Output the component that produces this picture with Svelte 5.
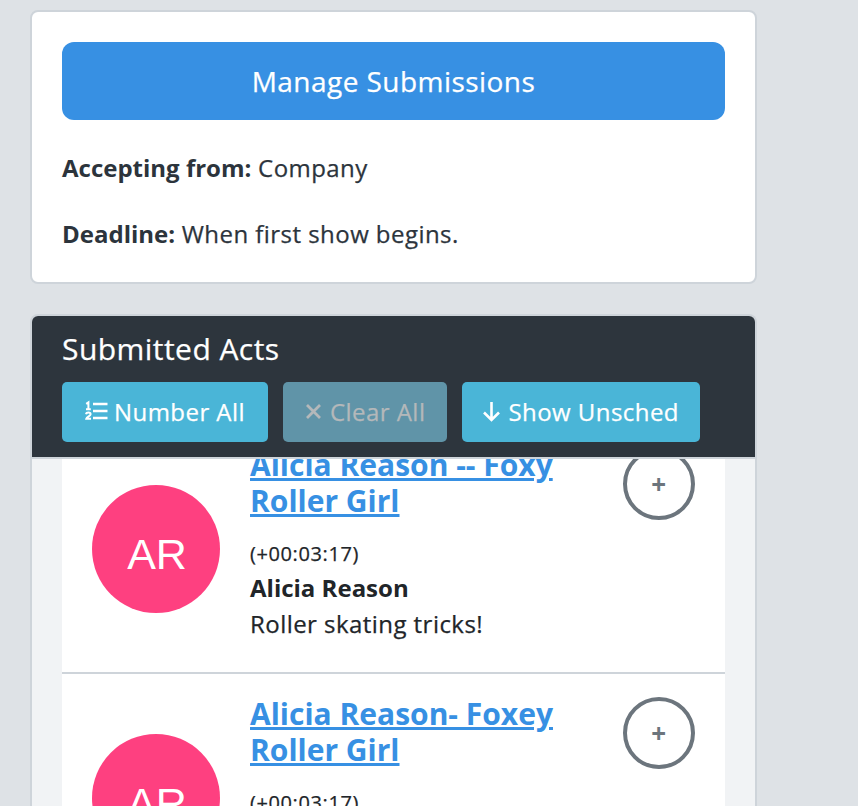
<script>
  const acts = [
    { title: 'Alicia Reason -- Foxy Roller Girl', time: '(+00:03:17)', name: 'Alicia Reason', desc: 'Roller skating tricks!' },
    { title: 'Alicia Reason- Foxey Roller Girl', time: '(+00:03:17)', name: 'Alicia Reason', desc: 'Roller skating tricks!' }
  ];
</script>

<div class="page">
  <section class="card info">
    <button class="manage">Manage Submissions</button>
    <p><strong>Accepting from:</strong> Company</p>
    <p><strong>Deadline:</strong> When first show begins.</p>
  </section>

  <section class="card acts">
    <header>
      <h2>Submitted Acts</h2>
      <div class="tools">
        <button class="tool number">
          <svg width="24" height="22" viewBox="0 0 24 22" fill="none" stroke="currentColor">
            <path d="M2.2 3.8 4.4 2.4V9.2M2 9.2H6.8" stroke-width="2"/>
            <path d="M2 14.2C2.4 12 6.6 12 6.6 14.2c0 1.8-3.8 2.4-4.3 4.6H7" stroke-width="2"/>
            <path d="M9 4h14.5M9 11h14.5M9 18h14.5" stroke-width="2.6"/>
          </svg>
          Number All
        </button>
        <button class="tool off" disabled>
          <svg width="17" height="17" viewBox="0 0 17 17" fill="none" stroke="currentColor" stroke-width="2.8">
            <path d="M2 2l13 13M15 2 2 15"/>
          </svg>
          Clear All
        </button>
        <button class="tool unsched">
          <svg width="19" height="22" viewBox="0 0 19 22" fill="none" stroke="currentColor" stroke-width="2.6">
            <path d="M9.5 2v18M2 12.5l7.5 7.5 7.5-7.5"/>
          </svg>
          Show Unsched
        </button>
      </div>
    </header>

    <div class="viewport">
      <ul>
        {#each acts as act}
          <li>
            <div class="avatar">AR</div>
            <div class="body">
              <a href="#act">{act.title}</a>
              <div class="time">{act.time}</div>
              <div class="name">{act.name}</div>
              <div class="desc">{act.desc}</div>
            </div>
            <button class="add">+</button>
          </li>
        {/each}
      </ul>
    </div>
  </section>
</div>

<style>
  :global(html), :global(body) {
    margin: 0;
    height: 806px;
    overflow: hidden;
    background: #dee2e6;
  }
  .page {
    box-sizing: border-box;
    height: 806px;
    overflow: hidden;
    padding: 10px 101px 0 30px;
    font-family: "Open Sans", sans-serif;
    font-size: 24px;
    letter-spacing: 0.45px;
    line-height: 33px;
    color: #2c343c;
    -webkit-text-stroke: 0.25px currentColor;
  }
  strong, .name, a {
    letter-spacing: 0;
    font-weight: 700;
    -webkit-text-stroke: 0;
  }
  .card {
    border: 2px solid #ced4da;
    border-radius: 8px;
    background: #fff;
  }
  .info {
    padding: 30px 30px 0;
    height: 274px;
    box-sizing: border-box;
    margin-bottom: 30px;
  }
  button {
    font-family: inherit;
    letter-spacing: inherit;
    border: 0;
    padding: 0;
  }
  .manage {
    display: block;
    width: 100%;
    height: 78px;
    border-radius: 12px;
    background: #3790e3;
    color: #fff;
    font-size: 28px;
    margin-bottom: 31px;
  }
  p {
    margin: 0 0 33px;
  }
  .acts {
    background: #f1f3f5;
    border-bottom: 0;
    height: 600px;
    overflow: hidden;
  }
  header {
    background: #2d353d;
    padding: 12px 30px 15px;
    border-bottom: 2px solid #ced4da;
  }
  h2 {
    margin: 0 0 12px;
    font-size: 30px;
    font-weight: 400;
    line-height: 42px;
    color: #fff;
  }
  .tools {
    display: flex;
    gap: 15px;
  }
  .tool {
    display: flex;
    align-items: center;
    justify-content: center;
    gap: 6px;
    box-sizing: border-box;
    height: 60px;
    padding: 0 22px 2px;
    border-radius: 5px;
    background: #4ab5d7;
    color: #fff;
    font-size: 24px;
  }
  .tool.number {
    padding-right: 23px;
  }
  .tool.off {
    gap: 8px;
    background: #6094a8;
    color: #b4b8ba;
  }
  .tool.unsched {
    gap: 7px;
    padding-left: 20px;
    padding-right: 21px;
  }
  .viewport {
    overflow: hidden;
    padding: 0 30px;
  }
  ul {
    list-style: none;
    margin: -34px 0 0;
    padding: 0;
  }
  li {
    display: flex;
    align-items: flex-start;
    box-sizing: border-box;
    height: 249px;
    padding: 22px 30px 0;
    background: #fff;
    border-bottom: 2px solid #ced4da;
    line-height: 36px;
    color: #212529;
  }
  .avatar {
    flex: none;
    width: 128px;
    height: 128px;
    margin-top: 38px;
    border-radius: 50%;
    background: #fe4080;
    color: #fff;
    font-family: "Liberation Sans", sans-serif;
    font-size: 43px;
    letter-spacing: 0;
    line-height: 138px;
    text-indent: 2px;
    text-align: center;
    -webkit-text-stroke: 0;
  }
  .body {
    flex: 1;
    margin-left: 30px;
    min-width: 0;
  }
  a {
    display: block;
    max-width: 330px;
    margin-bottom: 18px;
    color: #3790e3;
    font-size: 30px;
    text-decoration: underline;
    text-decoration-thickness: 3px;
  }
  .time {
    font-size: 20px;
    line-height: 33px;
    letter-spacing: 0.6px;
  }
  .add {
    flex: none;
    box-sizing: border-box;
    width: 72px;
    height: 72px;
    margin-top: 1px;
    border: 4px solid #6c757d;
    border-radius: 50%;
    background: #fff;
    color: #6c757d;
    font-size: 26px;
    font-weight: 700;
    line-height: 1;
    -webkit-text-stroke: 0;
  }
</style>
